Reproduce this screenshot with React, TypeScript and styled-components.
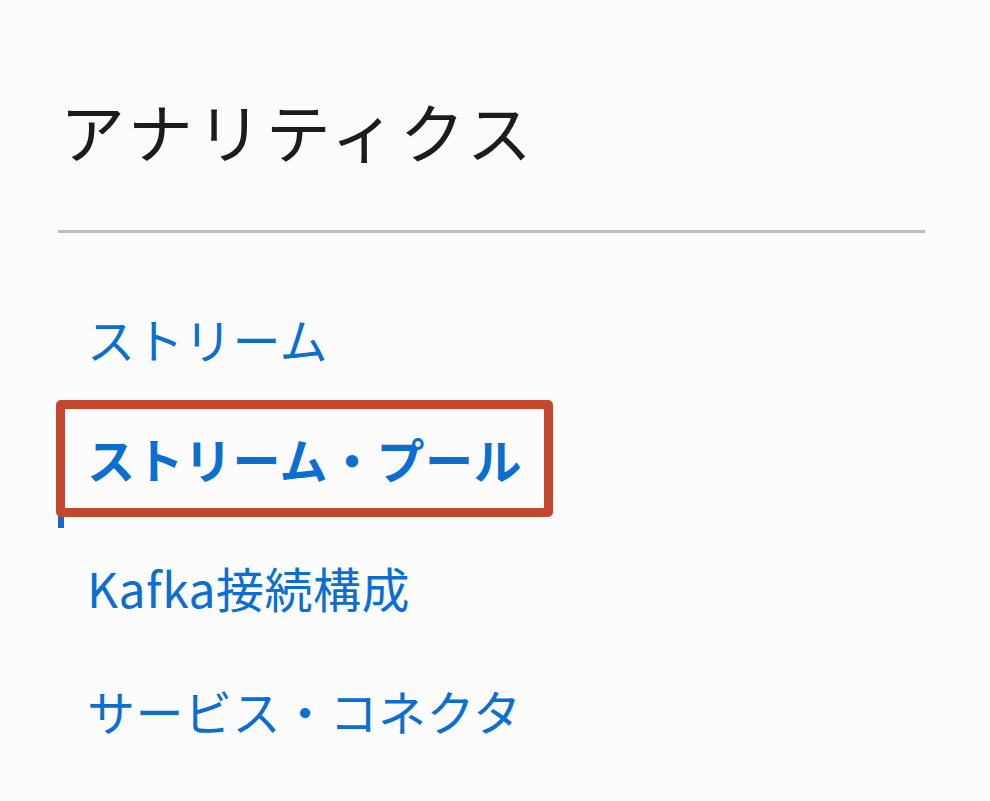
import React from "react";
import styled, { createGlobalStyle } from "styled-components";

const Global = createGlobalStyle`
  html, body { margin: 0; padding: 0; background: #fcfcfc; }
  body { font-family: "Noto Sans CJK JP", "Noto Sans", sans-serif; }
`;

const Page = styled.div`
  width: 990px;
  height: 801px;
  box-sizing: border-box;
  padding: 82px 0 0 58px;
  background: #fcfcfc;
`;

const Panel = styled.div`
  width: 867px;
  display: flex;
  flex-direction: column;
`;

const Title = styled.h1`
  margin: 0 0 0 2px;
  font-size: 65px;
  font-weight: 400;
  line-height: 96px;
  color: #1c1c1c;
  letter-spacing: 4px;
`;

const Divider = styled.hr`
  margin: 52px 0 0 0;
  border: none;
  height: 3px;
  background: #b9bec4;
`;

const Nav = styled.ul`
  list-style: none;
  margin: 46px 0 0 0;
  padding: 0;
  display: flex;
  flex-direction: column;
`;

const Item = styled.li<{ $active?: boolean }>`
  position: relative;
  height: ${(p) => (p.$active ? "126px" : "123px")};
  display: flex;
  align-items: center;
  padding-left: 23px;
  box-sizing: border-box;
  font-size: 48px;
  font-weight: ${(p) => (p.$active ? 700 : 400)};
  color: #0a6fd0;
  border-left: 6px solid ${(p) => (p.$active ? "#0a6fd0" : "transparent")};
`;

const Highlight = styled.span`
  position: absolute;
  left: -8px;
  top: -2px;
  width: 497px;
  height: 117px;
  box-sizing: border-box;
  border: 9px solid #c5462f;
  border-radius: 5px;
  pointer-events: none;
`;

const Label = styled.span<{ $active?: boolean }>`
  position: relative;
  top: ${(p) => (p.$active ? "-7px" : "-3px")};
  letter-spacing: 0.5px;
`;

const items = ["ストリーム", "ストリーム・プール", "Kafka接続構成", "サービス・コネクタ"];

export default function App() {
  return (
    <Page>
      <Global />
      <Panel>
        <Title>アナリティクス</Title>
        <Divider />
        <Nav>
          {items.map((t, i) => (
            <Item key={t} $active={i === 1}>
              {i === 1 && <Highlight />}
              <Label $active={i === 1}>{t}</Label>
            </Item>
          ))}
        </Nav>
      </Panel>
    </Page>
  );
}
